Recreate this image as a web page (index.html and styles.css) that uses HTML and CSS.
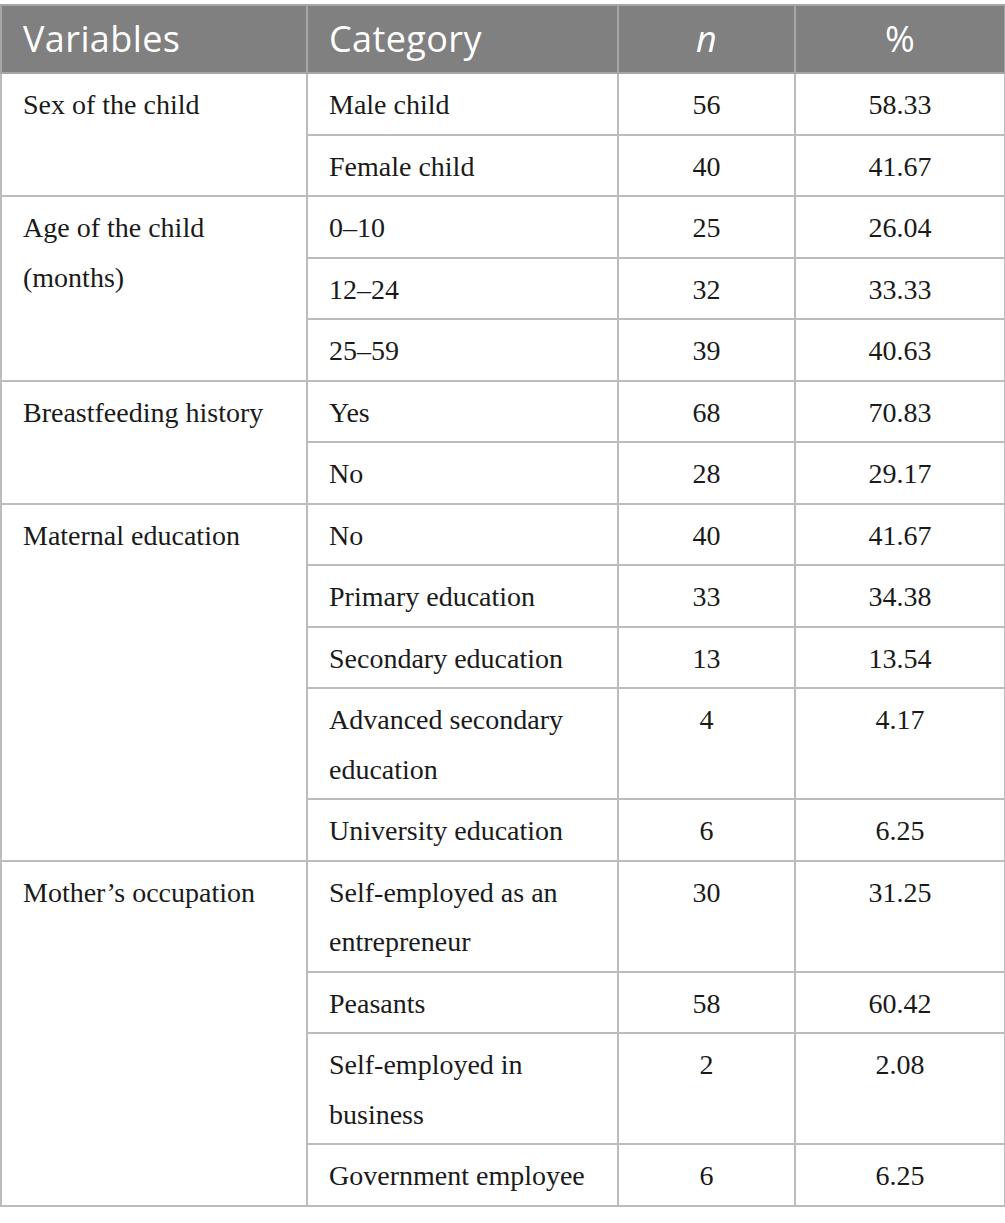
FILE: index.html
```html
<!DOCTYPE html>
<html>
<head>
<meta charset="utf-8">
<link rel="stylesheet" href="styles.css">
</head>
<body>
<table class="data">
  <colgroup>
    <col class="c1"><col class="c2"><col class="c3"><col class="c4">
  </colgroup>
  <thead>
    <tr><th class="left">Variables</th><th class="left">Category</th><th class="num"><i>n</i></th><th class="num">%</th></tr>
  </thead>
  <tbody>
    <tr><td rowspan="2">Sex of the child</td><td>Male child</td><td class="num">56</td><td class="num">58.33</td></tr>
    <tr><td>Female child</td><td class="num">40</td><td class="num">41.67</td></tr>
    <tr><td rowspan="3">Age of the child (months)</td><td>0–10</td><td class="num">25</td><td class="num">26.04</td></tr>
    <tr><td>12–24</td><td class="num">32</td><td class="num">33.33</td></tr>
    <tr><td>25–59</td><td class="num">39</td><td class="num">40.63</td></tr>
    <tr><td rowspan="2">Breastfeeding history</td><td>Yes</td><td class="num">68</td><td class="num">70.83</td></tr>
    <tr><td>No</td><td class="num">28</td><td class="num">29.17</td></tr>
    <tr><td rowspan="5">Maternal education</td><td>No</td><td class="num">40</td><td class="num">41.67</td></tr>
    <tr><td>Primary education</td><td class="num">33</td><td class="num">34.38</td></tr>
    <tr><td>Secondary education</td><td class="num">13</td><td class="num">13.54</td></tr>
    <tr><td>Advanced secondary education</td><td class="num">4</td><td class="num">4.17</td></tr>
    <tr><td>University education</td><td class="num">6</td><td class="num">6.25</td></tr>
    <tr><td rowspan="4">Mother’s occupation</td><td>Self-employed as an entrepreneur</td><td class="num">30</td><td class="num">31.25</td></tr>
    <tr><td>Peasants</td><td class="num">58</td><td class="num">60.42</td></tr>
    <tr><td>Self-employed in business</td><td class="num">2</td><td class="num">2.08</td></tr>
    <tr><td>Government employee</td><td class="num">6</td><td class="num">6.25</td></tr>
  </tbody>
</table>
</body>
</html>
```
FILE: styles.css
```css
html, body {
  margin: 0;
  padding: 0;
  background: #ffffff;
}
body {
  padding: 4px 0 0 0;
}
.data {
  border-collapse: collapse;
  table-layout: fixed;
  width: 1004px;
  font-family: "Liberation Serif", "Times New Roman", serif;
  font-size: 28px;
  color: #1a1a1a;
}
.c1 { width: 306px; }
.c2 { width: 311px; }
.c3 { width: 177px; }
.c4 { width: 210px; }
.data th,
.data td {
  border: 2px solid #bcbcbc;
  vertical-align: top;
  text-align: left;
}
.data th {
  background: #808080;
  color: #ffffff;
  font-family: "Open Sans", "Noto Sans", sans-serif;
  font-weight: 400;
  font-size: 36px;
  letter-spacing: 0.4px;
  line-height: 48px;
  padding: 9px 21px 9px 21px;
  border-color: #a6a6a6;
}
.data td {
  line-height: 49.5px;
  padding: 6px 21px 4px 21px;
}
.data .num {
  text-align: center;
}
```
